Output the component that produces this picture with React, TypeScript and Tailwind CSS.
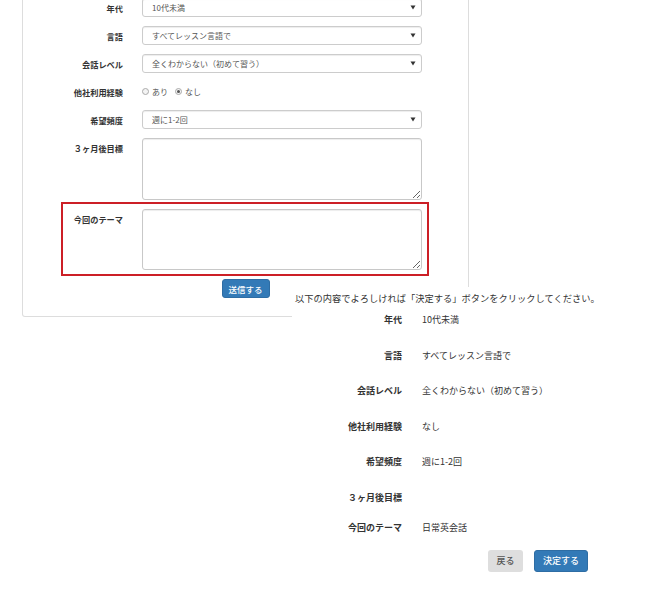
const font = "font-['Noto_Sans_CJK_JP','Noto_Sans',sans-serif]";

function SelectBox({ value }: { value: string }) {
  return (
    <div className="flex h-[19px] w-[280px] items-center justify-between rounded-[3px] border border-[#cccccc] bg-white pl-[9px] pr-[5px] text-[8px] leading-[10px] text-[#555] shadow-[inset_0_1px_1px_rgba(0,0,0,0.075)]">
      <span>{value}</span>
      <svg width="6" height="5" viewBox="0 0 6 5">
        <path d="M0.5 0.5 L5.5 0.5 L3 4.5 Z" fill="#333" />
      </svg>
    </div>
  );
}

function Label({ text, className = '' }: { text: string; className?: string }) {
  return <div className={`text-right text-[8.2px] font-bold leading-[10px] text-[#333] ${className}`}>{text}</div>;
}

function Radio({ checked, label }: { checked?: boolean; label: string }) {
  return (
    <span className="flex items-center gap-[3px]">
      <span className="flex h-[7px] w-[7px] items-center justify-center rounded-full border border-[#aaa] bg-[#f4f4f4]">
        {checked && <span className="h-[3px] w-[3px] rounded-full bg-[#555]" />}
      </span>
      <span>{label}</span>
    </span>
  );
}

const summary = [
  { label: '年代', value: '10代未満' },
  { label: '言語', value: 'すべてレッスン言語で' },
  { label: '会話レベル', value: '全くわからない（初めて習う）' },
  { label: '他社利用経験', value: 'なし' },
  { label: '希望頻度', value: '週に1-2回' },
  { label: '３ヶ月後目標', value: '' },
  { label: '今回のテーマ', value: '日常英会話' },
];

export default function App() {
  return (
    <div className={`relative h-[600px] w-[660px] overflow-hidden bg-white ${font}`}>
      {/* input form panel */}
      <div className="ml-[22px] w-[447px] rounded-b-[3px] border-x border-b border-[#dddddd] pb-[18px]">
        <div className="-mt-[2px] flex items-center">
          <Label text="年代" className="w-[100px]" />
          <div className="ml-[19px]">
            <SelectBox value="10代未満" />
          </div>
        </div>
        <div className="mt-[9px] flex items-center">
          <Label text="言語" className="w-[100px]" />
          <div className="ml-[19px]">
            <SelectBox value="すべてレッスン言語で" />
          </div>
        </div>
        <div className="mt-[9px] flex items-center">
          <Label text="会話レベル" className="w-[100px]" />
          <div className="ml-[19px]">
            <SelectBox value="全くわからない（初めて習う）" />
          </div>
        </div>
        <div className="mt-[9px] flex h-[19px] items-center">
          <Label text="他社利用経験" className="w-[100px]" />
          <div className="ml-[19px] flex items-center gap-[7px] text-[8px] leading-[10px] text-[#555]">
            <Radio label="あり" />
            <Radio checked label="なし" />
          </div>
        </div>
        <div className="mt-[9px] flex items-center">
          <Label text="希望頻度" className="w-[100px]" />
          <div className="ml-[19px]">
            <SelectBox value="週に1-2回" />
          </div>
        </div>
        <div className="mt-[9px] flex items-start">
          <Label text="３ヶ月後目標" className="w-[100px] pt-[5px]" />
          <textarea className="ml-[19px] block h-[62px] w-[280px] resize-y rounded-[3px] border border-[#c8c8c8] shadow-[inset_0_1px_1px_rgba(0,0,0,0.075)] outline-none" />
        </div>
        <div className="ml-[38px] mt-[2px] flex w-[368px] items-start border-2 border-[#cc1f26] pb-[4px] pt-[5px]">
          <Label text="今回のテーマ" className="w-[60px] pt-[5px]" />
          <textarea className="ml-[19px] block h-[61px] w-[280px] resize-y rounded-[3px] border border-[#c8c8c8] shadow-[inset_0_1px_1px_rgba(0,0,0,0.075)] outline-none" />
        </div>
        <div className="mt-[3px] flex justify-center">
          <button className="h-[19px] w-[48px] rounded-[3px] border border-[#2e6da4] bg-[#337ab7] text-[8.5px] font-medium leading-[10px] text-white">
            送信する
          </button>
        </div>
      </div>

      {/* confirmation panel laid over the form */}
      <div className="absolute bottom-0 left-[292px] right-0 top-[287px] bg-white">
        <p className="pl-[3px] pt-[5px] text-[9.25px] leading-[13px] text-[#333]">
          以下の内容でよろしければ「決定する」ボタンをクリックしてください。
        </p>
        <div className="mt-[8px] flex flex-col">
          {summary.map((row, i) => (
            <div
              key={row.label}
              className={`flex text-[9px] leading-[13px] text-[#333] ${i === 0 ? '' : i === 6 ? 'mt-[17px]' : 'mt-[22.5px]'}`}
            >
              <div className="w-[110px] text-right font-bold">{row.label}</div>
              <div className="ml-[20px]">{row.value}</div>
            </div>
          ))}
        </div>
        <div className="mt-[16px] flex gap-[11px] pl-[196px]">
          <button className="h-[22px] w-[35px] rounded-[3px] bg-[#dedede] text-[9px] font-medium text-[#555]">戻る</button>
          <button className="h-[22px] w-[54px] rounded-[3px] border border-[#2e6da4] bg-[#337ab7] text-[9px] font-medium text-white">
            決定する
          </button>
        </div>
      </div>
    </div>
  );
}
